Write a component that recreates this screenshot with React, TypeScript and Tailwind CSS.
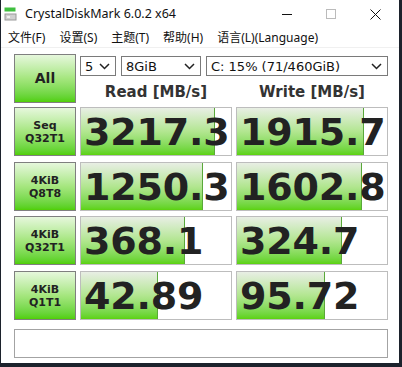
import React from 'react';

const rows = [
    { l1: 'Seq', l2: 'Q32T1', read: '3217.3', rf: 134, write: '1915.7', wf: 127, mt: 'mt-[4px]' },
    { l1: '4KiB', l2: 'Q8T8', read: '1250.3', rf: 122, write: '1602.8', wf: 125, mt: 'mt-[6px]' },
    { l1: '4KiB', l2: 'Q32T1', read: '368.1', rf: 104, write: '324.7', wf: 105, mt: 'mt-[5px]' },
    { l1: '4KiB', l2: 'Q1T1', read: '42.89', rf: 77, write: '95.72', wf: 88, mt: 'mt-[6px]' },
];

function Chevron() {
    return (
        <svg width="11" height="7" viewBox="0 0 11 7" className="shrink-0">
            <polyline points="1,1 5.5,5.5 10,1" fill="none" stroke="#222" strokeWidth="1.5" />
        </svg>
    );
}

function Select({ w, text }: { w: string; text: string }) {
    return (
        <div className={`${w} h-[20px] border border-[#7a7a7a] bg-white flex items-center justify-between pl-[4px] pr-[5px] text-[13px] leading-none text-[#111]`}>
            <span>{text}</span>
            <Chevron />
        </div>
    );
}

function Cell({ value, fill }: { value: string; fill: number }) {
    return (
        <div className="relative w-[152px] h-full border border-[#bdbdbd] bg-white">
            <div
                className="absolute left-0 top-0 bottom-0 bg-linear-to-b from-[#e8eee4] via-[#b2e690] to-[#5cd20a] border-r border-[#5aa83a]"
                style={{ width: fill }}
            ></div>
            <div className="relative h-full flex items-center pl-[3px] text-[38px] leading-none font-bold text-[#222] whitespace-nowrap tracking-[-0.2px]">
                {value}
            </div>
        </div>
    );
}

export default function App() {
    return (
        <div className="w-[402px] h-[367px] bg-[#1c222c] overflow-hidden" style={{ fontFamily: '"DejaVu Sans", sans-serif' }}>
            <div className="ml-px w-[398px] h-[363px] bg-white flex flex-col overflow-hidden">
                {/* Title bar */}
                <div className="h-[28px] flex items-center shrink-0">
                    <svg width="14" height="14" viewBox="0 0 14 14" className="ml-[3px]">
                        <rect x="0.5" y="0.5" width="11" height="4" fill="#3fbf3f" />
                        <rect x="0.5" y="6.5" width="12" height="7" fill="#9a9a9a" />
                        <rect x="1.5" y="7.5" width="10" height="5" fill="#d0d0d0" />
                        <rect x="3" y="9" width="3" height="2" fill="#f0f0f0" />
                    </svg>
                    <span className="ml-[7px] text-[12.5px] text-[#111]" style={{ fontFamily: '"Noto Sans", sans-serif' }}>
                        CrystalDiskMark 6.0.2 x64
                    </span>
                    <div className="flex-1"></div>
                    <div className="w-[44px] h-[28px] flex items-center justify-center">
                        <div className="w-[10px] h-px bg-[#111]"></div>
                    </div>
                    <div className="w-[44px] h-[28px] flex items-center justify-center">
                        <div className="w-[10px] h-[10px] border border-[#bbb]"></div>
                    </div>
                    <div className="w-[46px] h-[28px] flex items-center justify-center pr-[2px]">
                        <svg width="11" height="11" viewBox="0 0 11 11">
                            <path d="M0.5 0.5 L10.5 10.5 M10.5 0.5 L0.5 10.5" stroke="#111" strokeWidth="1" />
                        </svg>
                    </div>
                </div>

                {/* Menu bar */}
                <div
                    className="h-[20px] flex items-center text-[12px] text-[#111] border-b border-[#f0f0f0] shrink-0"
                    style={{ fontFamily: '"Noto Sans", "Noto Sans CJK SC", sans-serif' }}
                >
                    <span className="px-[7px]">文件(F)</span>
                    <span className="px-[7px]">设置(S)</span>
                    <span className="px-[7px]">主题(T)</span>
                    <span className="px-[7px]">帮助(H)</span>
                    <span className="px-[7px]">语言(L)(Language)</span>
                </div>

                {/* Main */}
                <div className="pl-[13px] pt-[6px] flex flex-col">
                    <div className="flex gap-[4px] h-[49px]">
                        <div className="w-[62px] h-full border border-[#7f7f7f] bg-linear-to-b from-[#e6f7dc] via-[#a5e67e] to-[#50cf00] flex items-center justify-center text-[14px] font-bold text-[#222]">
                            All
                        </div>
                        <div className="w-[308px] flex flex-col">
                            <div className="flex gap-[5px] mt-[2px]">
                                <Select w="w-[36px]" text="5" />
                                <Select w="w-[80px]" text="8GiB" />
                                <Select w="w-[182px]" text="C: 15% (71/460GiB)" />
                            </div>
                            <div className="flex gap-[4px] mt-[7px]">
                                <div className="w-[152px] text-center text-[15px] font-bold text-[#333] leading-[18px]">Read [MB/s]</div>
                                <div className="w-[152px] text-center text-[15px] font-bold text-[#333] leading-[18px]">Write [MB/s]</div>
                            </div>
                        </div>
                    </div>

                    {rows.map((r, i) => (
                        <div key={i} className={`flex gap-[4px] h-[49px] ${r.mt}`}>
                            <div className="w-[62px] h-full border border-[#7f7f7f] bg-linear-to-b from-[#e6f7dc] via-[#a5e67e] to-[#50cf00] flex flex-col items-center justify-center text-[11px] leading-[13px] font-bold text-[#222]">
                                <span>{r.l1}</span>
                                <span>{r.l2}</span>
                            </div>
                            <Cell value={r.read} fill={r.rf} />
                            <Cell value={r.write} fill={r.wf} />
                        </div>
                    ))}

                    {/* Status bar */}
                    <div className="mt-[9px] w-[374px] h-[29px] border border-[#a3a3a3] bg-white"></div>
                </div>
            </div>
        </div>
    );
}
